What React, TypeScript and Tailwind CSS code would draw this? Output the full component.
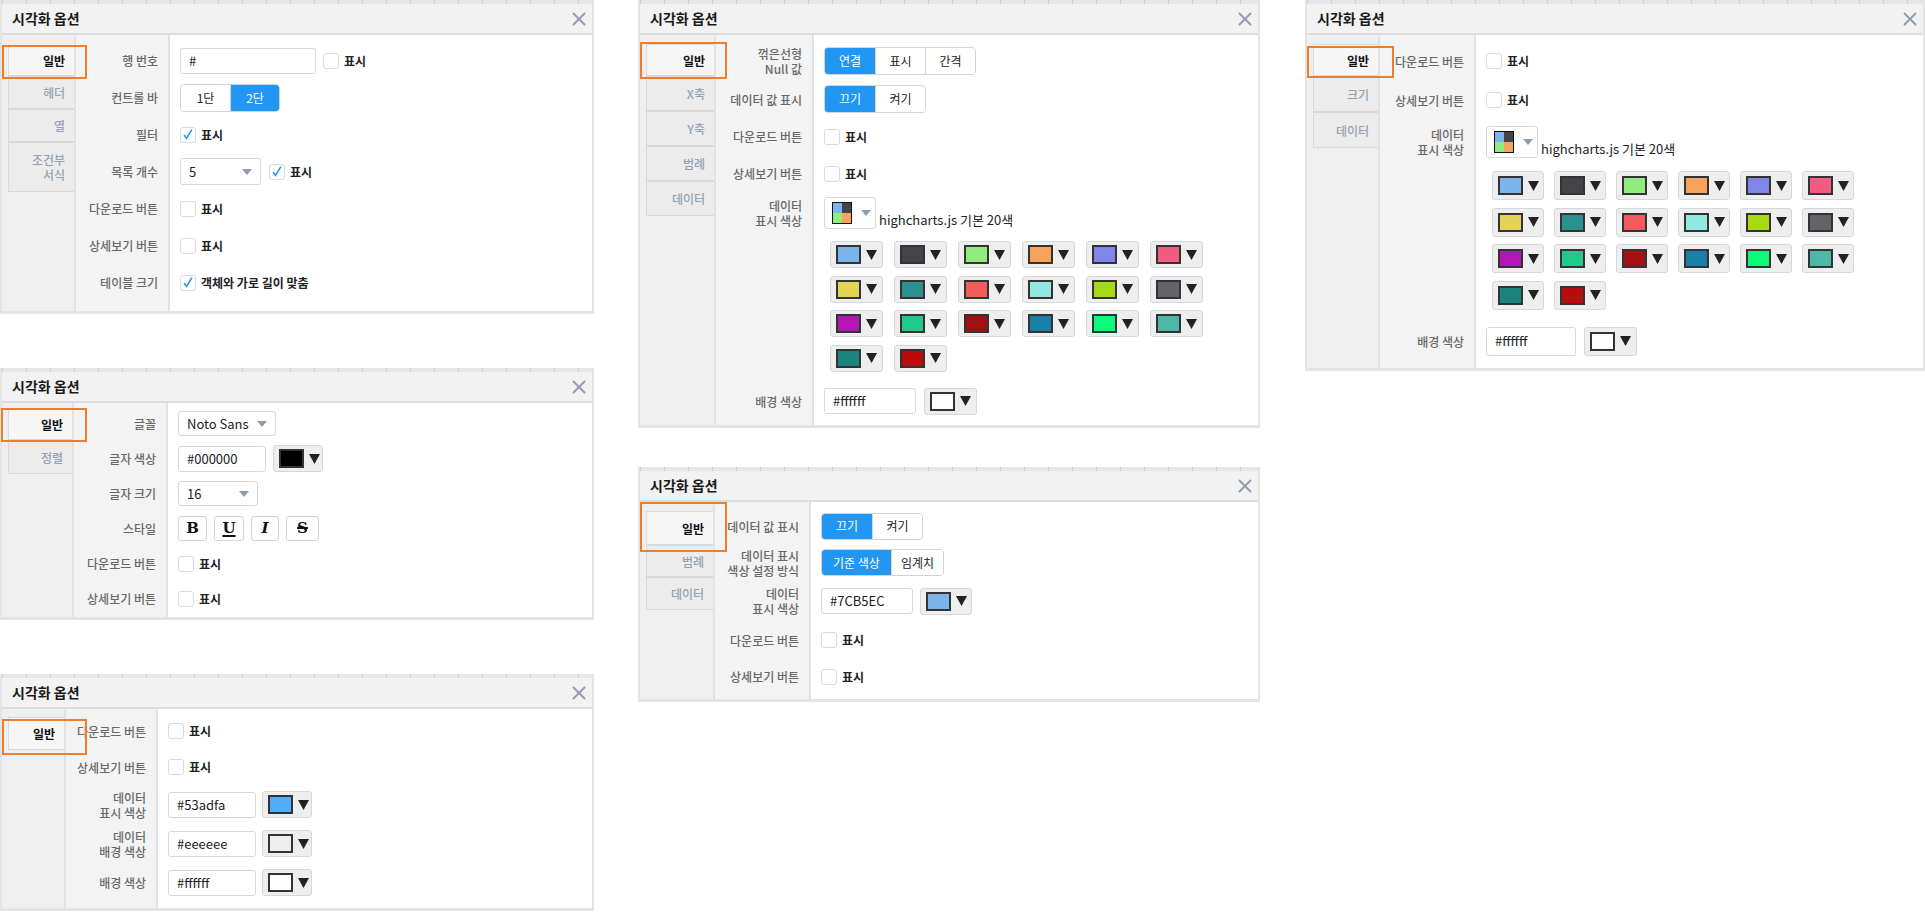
import React from 'react';

type Tab = { t: React.ReactNode; h: string; on?: boolean };
type Row = { l?: React.ReactNode; h: string; c: React.ReactNode; cc?: string };

function Tri() {
  return (
    <svg viewBox="0 0 11 10" className="w-[11px] h-[10px] shrink-0">
      <polygon points="0,0 11,0 5.5,10" fill="#222" />
    </svg>
  );
}

function Caret() {
  return (
    <svg viewBox="0 0 10 6" className="w-[10px] h-[6px] shrink-0">
      <polygon points="0,0 10,0 5,6" fill="#8c9db0" />
    </svg>
  );
}

function CloseX() {
  return (
    <svg viewBox="0 0 14 14" className="w-[14px] h-[14px]">
      <path d="M1.5 1.5 L12.5 12.5 M12.5 1.5 L1.5 12.5" stroke="#8d9cae" strokeWidth="1.8" strokeLinecap="round" />
    </svg>
  );
}

function Check({ on, label = '표시', cls = '' }: { on?: boolean; label?: string; cls?: string }) {
  return (
    <div className={'flex items-center gap-[5px] ' + cls}>
      <span className="w-[16px] h-[16px] border border-[#d9dcdf] rounded-[3px] bg-white flex items-center justify-center">
        {on && (
          <svg viewBox="0 0 16 16" className="w-[15px] h-[15px]">
            <path d="M3.5 8.5 L6.3 12.5 L12.5 2.5" fill="none" stroke="#2196f3" strokeWidth="1.8" />
          </svg>
        )}
      </span>
      <span className="text-[12px] font-bold text-[#222]">{label}</span>
    </div>
  );
}

function Seg({ items, h = 'h-[28px]' }: { items: [string, string, boolean?][]; h?: string }) {
  return (
    <div className={'flex border border-[#cfd4d9] rounded-[4px] overflow-hidden ' + h}>
      {items.map(([t, w, on], i) => (
        <div
          key={i}
          className={
            w +
            ' flex items-center justify-center text-[12px] ' +
            (i > 0 ? 'border-l border-[#d6d9dc] ' : '') +
            (on ? 'bg-[#2196f3] text-white' : 'bg-white text-[#222]')
          }
        >
          {t}
        </div>
      ))}
    </div>
  );
}

function Input({ v, w, h = 'h-[26px]' }: { v: string; w: string; h?: string }) {
  return (
    <div className={w + ' ' + h + ' border border-[#d3d8dd] rounded-[3px] bg-white flex items-center px-[8px] text-[13px] text-[#222]'}>
      {v}
    </div>
  );
}

function Select({ v, w, h = 'h-[26px]' }: { v: string; w: string; h?: string }) {
  return (
    <div className={w + ' ' + h + ' border border-[#d3d8dd] rounded-[3px] bg-white flex items-center justify-between pl-[8px] pr-[8px] text-[13px] text-[#222]'}>
      <span>{v}</span>
      <Caret />
    </div>
  );
}

function ColorBtn({ sw, w = 'w-[53px]', h = 'h-[27px]', cls = '' }: { sw: string; w?: string; h?: string; cls?: string }) {
  return (
    <div className={w + ' ' + h + ' ' + cls + ' bg-[#eeeeee] border border-[#d5d7da] rounded-[3px] flex items-center pl-[5px] gap-[5px]'}>
      <span className={sw + ' w-[25px] h-[19px] border-2 border-[#333]'} />
      <Tri />
    </div>
  );
}

function Palette() {
  return (
    <div className="flex items-end gap-[3px]">
      <div className="w-[52px] h-[32px] border border-[#d3d8dd] rounded-[3px] bg-white flex items-center pl-[7px] gap-[9px]">
        <span className="w-[20px] h-[22px] border-[1.5px] border-[#111] grid grid-cols-2 grid-rows-2">
          <span className="bg-[#7cb5ec]" />
          <span className="bg-[#434348]" />
          <span className="bg-[#90ed7d]" />
          <span className="bg-[#f7a35c]" />
        </span>
        <Caret />
      </div>
      <span className="text-[13px] text-[#222] leading-[16px] pb-[1px]">highcharts.js 기본 20색</span>
    </div>
  );
}

const SWATCHES = [
  'bg-[#7cb5ec]', 'bg-[#434348]', 'bg-[#90ed7d]', 'bg-[#f7a35c]', 'bg-[#8085e9]', 'bg-[#f15c80]',
  'bg-[#e4d354]', 'bg-[#2b908f]', 'bg-[#f45b5b]', 'bg-[#91e8e1]', 'bg-[#a5db12]', 'bg-[#646468]',
  'bg-[#b416b4]', 'bg-[#1fcb89]', 'bg-[#a21014]', 'bg-[#1a80a8]', 'bg-[#0cfa79]', 'bg-[#4fb7a8]',
  'bg-[#1b847f]', 'bg-[#b90c0c]',
];

function Panel({
  h, tabW, labW, tabs, tabPt, rowPt, rows, ring,
}: {
  h: string; tabW: string; labW: string; tabs: Tab[]; tabPt: string; rowPt: string; rows: Row[]; ring: string;
}) {
  return (
    <div className={'relative flex flex-col bg-white border-x-2 border-b-[3px] border-[#e4e4e4] ' + h}>
      <div className="h-[4px] shrink-0 bg-[#e7e7e7] bg-[image:repeating-linear-gradient(90deg,#cfcfcf_0_1px,transparent_1px_24px)]" />
      <div className="h-[31px] shrink-0 bg-[#f2f2f2] border-b-2 border-[#d9dee3] flex items-center justify-between pl-[10px] pr-[6px]">
        <span className="text-[14px] font-bold text-[#1a1a1a]">시각화 옵션</span>
        <CloseX />
      </div>
      <div className="flex flex-1 min-h-0">
        <div className={tabW + ' ' + tabPt + ' shrink-0 bg-[#efefef] border-r-2 border-[#dfe3e7] flex flex-col'}>
          {tabs.map((t, i) => (
            <div
              key={i}
              className={
                t.h +
                ' ml-[6px] border border-r-0 border-[#d9d9d9] flex items-center justify-end pr-[9px] text-right text-[12px] leading-[15px] ' +
                (t.on ? 'bg-[#f6f6f6] text-[#111] font-bold' : 'bg-[#ececec] text-[#93a3b5] font-medium')
              }
            >
              <span>{t.t}</span>
            </div>
          ))}
        </div>
        <div className={labW + ' ' + rowPt + ' shrink-0 bg-[#f3f3f3] border-r-2 border-[#dfe3e7] flex flex-col'}>
          {rows.map((r, i) => (
            <div key={i} className={r.h + ' shrink-0 flex items-center justify-end pr-[10px] text-right text-[12px] leading-[15px] font-medium text-[#686868]'}>
              <span>{r.l}</span>
            </div>
          ))}
        </div>
        <div className={rowPt + ' flex-1 min-w-0 flex flex-col'}>
          {rows.map((r, i) => (
            <div key={i} className={r.h + ' shrink-0 ' + (r.cc ?? 'flex items-center pl-[10px]')}>
              {r.c}
            </div>
          ))}
        </div>
      </div>
      <div className={'absolute border-2 border-[#ee7d2e] pointer-events-none ' + ring} />
    </div>
  );
}

function Swatches({ w, h, gap }: { w: string; h: string; gap: string }) {
  return (
    <div className={'grid grid-cols-6 w-max ' + gap}>
      {SWATCHES.map((s) => (
        <ColorBtn key={s} sw={s} w={w} h={h} />
      ))}
    </div>
  );
}

export default function App() {
  return (
    <div className="flex w-[1925px] h-[912px] overflow-hidden bg-white font-['Noto_Sans_CJK_KR','Noto_Sans',sans-serif]">
      {/* left column */}
      <div className="w-[594px] shrink-0 flex flex-col">
        <Panel
          h="h-[314px]"
          tabW="w-[74px]"
          labW="w-[94px]"
          tabPt="pt-[10px]"
          rowPt="pt-[7px]"
          ring="left-0 top-[45px] w-[85px] h-[34px]"
          tabs={[
            { t: '일반', h: 'h-[31px]', on: true },
            { t: '헤더', h: 'h-[33px]' },
            { t: '열', h: 'h-[33px]' },
            { t: <>조건부<br />서식</>, h: 'h-[50px]' },
          ]}
          rows={[
            { l: '행 번호', h: 'h-[37px]', c: <><Input v="#" w="w-[136px]" /><Check cls="ml-[7px]" /></> },
            { l: '컨트롤 바', h: 'h-[37px]', c: <Seg items={[['1단', 'w-[49px]'], ['2단', 'w-[49px]', true]]} /> },
            { l: '필터', h: 'h-[37px]', c: <Check on /> },
            { l: '목록 개수', h: 'h-[37px]', c: <><Select v="5" w="w-[81px]" h="h-[27px]" /><Check on cls="ml-[8px]" /></> },
            { l: '다운로드 버튼', h: 'h-[37px]', c: <Check /> },
            { l: '상세보기 버튼', h: 'h-[37px]', c: <Check /> },
            { l: '테이블 크기', h: 'h-[37px]', c: <Check on label="객체와 가로 길이 맞춤" /> },
          ]}
        />
        <div className="mt-[54px]">
          <Panel
            h="h-[252px]"
            tabW="w-[72px]"
            labW="w-[94px]"
            tabPt="pt-[5px]"
            rowPt="pt-[3px]"
            ring="left-[-1px] top-[40px] w-[86px] h-[34px]"
            tabs={[
              { t: '일반', h: 'h-[32px]', on: true },
              { t: '정렬', h: 'h-[34px]' },
            ]}
            rows={[
              { l: '글꼴', h: 'h-[35px]', c: <Select v="Noto Sans" w="w-[98px]" h="h-[25px]" /> },
              { l: '글자 색상', h: 'h-[35px]', c: <><Input v="#000000" w="w-[88px]" /><ColorBtn sw="bg-black" w="w-[50px]" cls="ml-[7px]" /></> },
              { l: '글자 크기', h: 'h-[35px]', c: <Select v="16" w="w-[80px]" h="h-[25px]" /> },
              {
                l: '스타일',
                h: 'h-[35px]',
                c: (
                  <div className="flex gap-[7px] font-['DejaVu_Serif',serif] text-[15px] text-[#111]">
                    <span className="w-[29px] h-[25px] border border-[#d0d5da] rounded-[3px] bg-white flex items-center justify-center font-bold">B</span>
                    <span className="w-[30px] h-[25px] border border-[#d0d5da] rounded-[3px] bg-white flex items-center justify-center font-bold">
                      <span className="underline decoration-2 underline-offset-2">U</span>
                    </span>
                    <span className="w-[28px] h-[25px] border border-[#d0d5da] rounded-[3px] bg-white flex items-center justify-center font-bold italic">I</span>
                    <span className="w-[33px] h-[25px] border border-[#d0d5da] rounded-[3px] bg-white flex items-center justify-center font-bold">
                      <span className="line-through decoration-2">S</span>
                    </span>
                  </div>
                ),
              },
              { l: '다운로드 버튼', h: 'h-[35px]', c: <Check /> },
              { l: '상세보기 버튼', h: 'h-[35px]', c: <Check /> },
            ]}
          />
        </div>
        <div className="mt-[54px]">
          <Panel
            h="h-[237px]"
            tabW="w-[64px]"
            labW="w-[92px]"
            tabPt="pt-[8px]"
            rowPt="pt-[4px]"
            ring="left-0 top-[45px] w-[85px] h-[36px]"
            tabs={[{ t: '일반', h: 'h-[33px]', on: true }]}
            rows={[
              { l: '다운로드 버튼', h: 'h-[36px]', c: <Check /> },
              { l: '상세보기 버튼', h: 'h-[36px]', c: <Check /> },
              { l: <>데이터<br />표시 색상</>, h: 'h-[39px]', c: <><Input v="#53adfa" w="w-[88px]" /><ColorBtn sw="bg-[#53adfa]" w="w-[50px]" cls="ml-[6px]" /></> },
              { l: <>데이터<br />배경 색상</>, h: 'h-[39px]', c: <><Input v="#eeeeee" w="w-[88px]" /><ColorBtn sw="bg-[#eeeeee]" w="w-[50px]" cls="ml-[6px]" /></> },
              { l: '배경 색상', h: 'h-[39px]', c: <><Input v="#ffffff" w="w-[88px]" /><ColorBtn sw="bg-white" w="w-[50px]" cls="ml-[6px]" /></> },
            ]}
          />
        </div>
      </div>

      {/* middle column */}
      <div className="ml-[44px] w-[622px] shrink-0 flex flex-col">
        <Panel
          h="h-[428px]"
          tabW="w-[76px]"
          labW="w-[98px]"
          tabPt="pt-[9px]"
          rowPt="pt-[7px]"
          ring="left-0 top-[42px] w-[87px] h-[37px]"
          tabs={[
            { t: '일반', h: 'h-[32px]', on: true },
            { t: 'X축', h: 'h-[35px]' },
            { t: 'Y축', h: 'h-[35px]' },
            { t: '범례', h: 'h-[35px]' },
            { t: '데이터', h: 'h-[35px]' },
          ]}
          rows={[
            { l: <>꺾은선형<br />Null 값</>, h: 'h-[38px]', c: <Seg items={[['연결', 'w-[50px]', true], ['표시', 'w-[50px]'], ['간격', 'w-[50px]']]} /> },
            { l: '데이터 값 표시', h: 'h-[38px]', c: <Seg items={[['끄기', 'w-[50px]', true], ['켜기', 'w-[50px]']]} /> },
            { l: '다운로드 버튼', h: 'h-[37px]', c: <Check /> },
            { l: '상세보기 버튼', h: 'h-[37px]', c: <Check /> },
            { l: <>데이터<br />표시 색상</>, h: 'h-[42px]', c: <Palette /> },
            { l: '', h: 'h-[148px]', cc: 'pl-[16px] pt-[7px]', c: <Swatches w="w-[53px]" h="h-[27px]" gap="gap-x-[11px] gap-y-[7.5px]" /> },
            { l: '배경 색상', h: 'h-[38px]', c: <><Input v="#ffffff" w="w-[92px]" /><ColorBtn sw="bg-white" cls="ml-[8px]" /></> },
          ]}
        />
        <div className="mt-[39px]">
          <Panel
            h="h-[235px]"
            tabW="w-[75px]"
            labW="w-[96px]"
            tabPt="pt-[9px]"
            rowPt="pt-[6px]"
            ring="left-0 top-[35px] w-[87px] h-[50px]"
            tabs={[
              { t: '일반', h: 'h-[34px]', on: true },
              { t: '범례', h: 'h-[32px]' },
              { t: '데이터', h: 'h-[33px]' },
            ]}
            rows={[
              { l: '데이터 값 표시', h: 'h-[36px]', c: <Seg h="h-[27px]" items={[['끄기', 'w-[50px]', true], ['켜기', 'w-[50px]']]} /> },
              { l: <>데이터 표시<br />색상 설정 방식</>, h: 'h-[37px]', c: <Seg h="h-[27px]" items={[['기준 색상', 'w-[69px]', true], ['임계치', 'w-[52px]']]} /> },
              { l: <>데이터<br />표시 색상</>, h: 'h-[40px]', c: <><Input v="#7CB5EC" w="w-[92px]" /><ColorBtn sw="bg-[#7cb5ec]" w="w-[52px]" cls="ml-[7px]" /></> },
              { l: '다운로드 버튼', h: 'h-[38px]', c: <Check /> },
              { l: '상세보기 버튼', h: 'h-[35px]', c: <Check /> },
            ]}
          />
        </div>
      </div>

      {/* right column */}
      <div className="ml-[45px] w-[620px] shrink-0 flex flex-col">
        <Panel
          h="h-[371px]"
          tabW="w-[73px]"
          labW="w-[96px]"
          tabPt="pt-[9px]"
          rowPt="pt-[7px]"
          ring="left-0 top-[46px] w-[87px] h-[32px]"
          tabs={[
            { t: '일반', h: 'h-[32px]', on: true },
            { t: '크기', h: 'h-[36px]' },
            { t: '데이터', h: 'h-[36px]' },
          ]}
          rows={[
            { l: '다운로드 버튼', h: 'h-[38px]', c: <Check /> },
            { l: '상세보기 버튼', h: 'h-[40px]', c: <Check /> },
            { l: <>데이터<br />표시 색상</>, h: 'h-[44px]', c: <Palette /> },
            { l: '', h: 'h-[154px]', cc: 'pl-[16px] pt-[7px]', c: <Swatches w="w-[52px]" h="h-[29px]" gap="gap-x-[10px] gap-y-[7.5px]" /> },
            { l: '배경 색상', h: 'h-[46px]', c: <><Input v="#ffffff" w="w-[90px]" h="h-[29px]" /><ColorBtn sw="bg-white" h="h-[29px]" cls="ml-[8px]" /></> },
          ]}
        />
      </div>
    </div>
  );
}
